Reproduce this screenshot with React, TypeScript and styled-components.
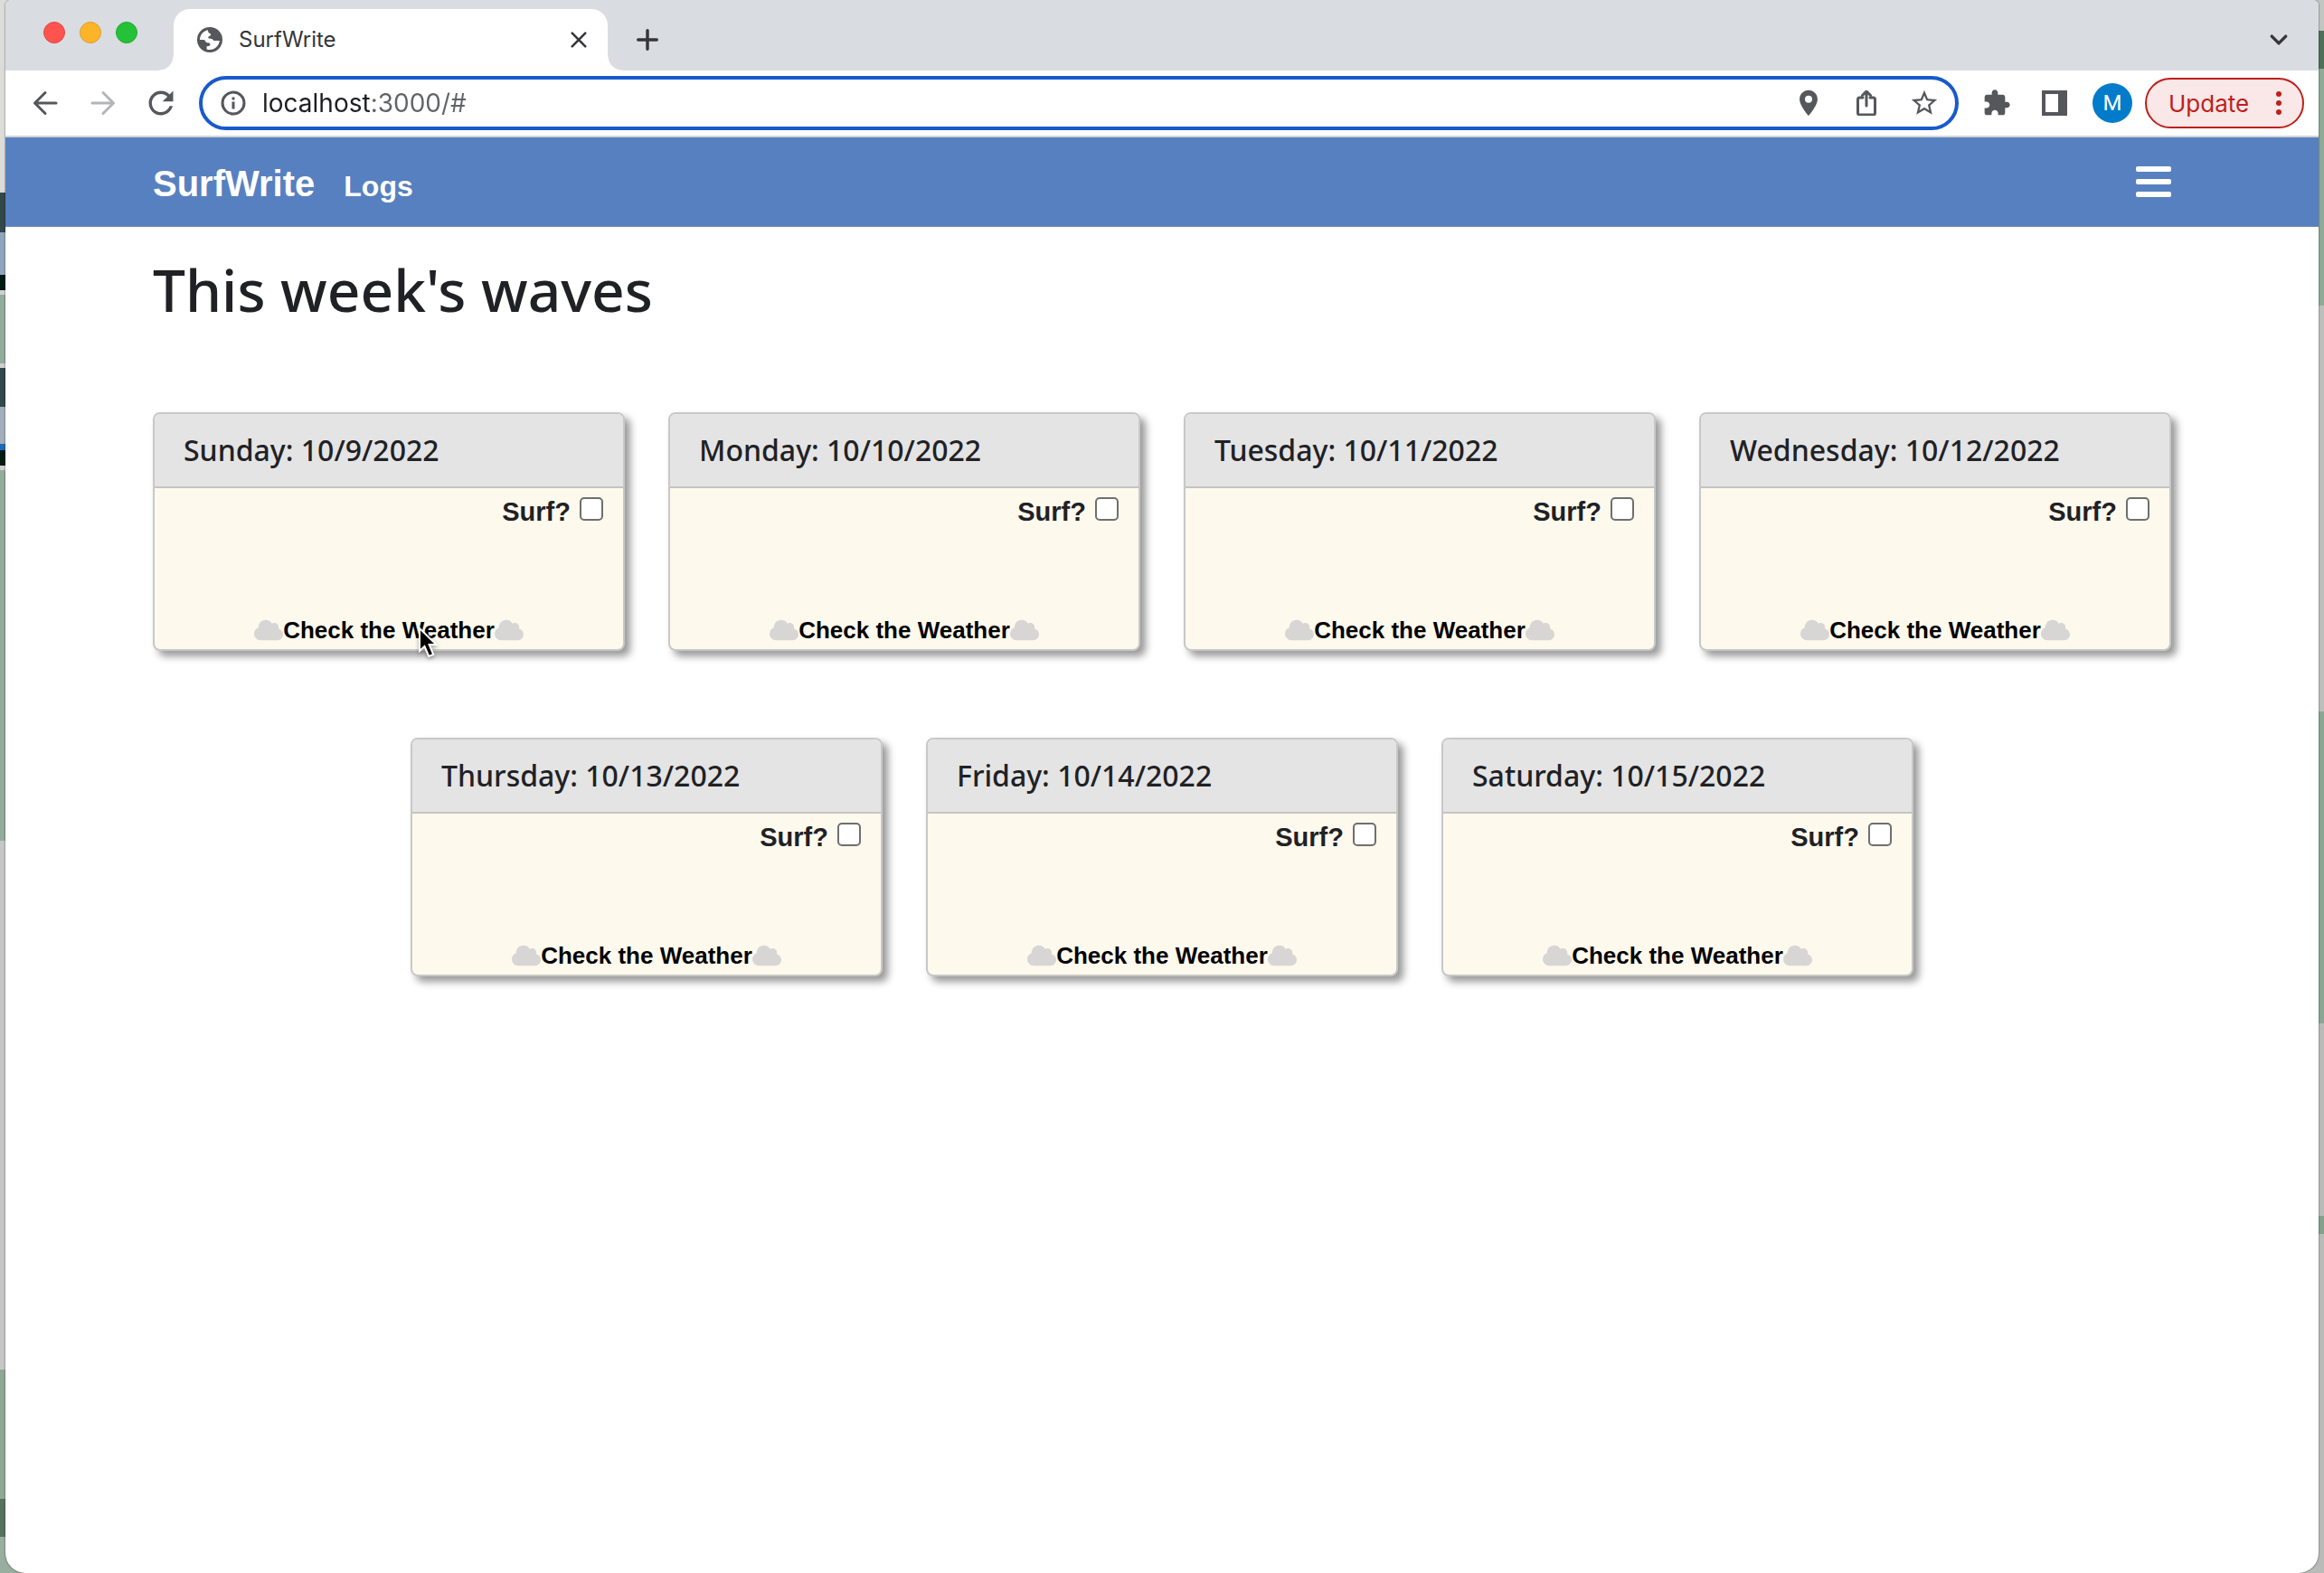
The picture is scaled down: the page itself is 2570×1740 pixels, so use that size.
import React from 'react';
import styled, { createGlobalStyle } from 'styled-components';
import { FaCloud } from 'react-icons/fa';

const uiFont = "Inter, 'Liberation Sans', sans-serif";
const bodyFont = "'Liberation Sans', Arial, sans-serif";
const headingFont = "'Noto Sans', 'Open Sans', sans-serif";

const iconGrey = '#55575b';

const GlobalStyle = createGlobalStyle`
  *, *::before, *::after { box-sizing: border-box; }
  body { margin: 0; }
  button, input { font: inherit; color: inherit; }
  h1, h2 { margin: 0; }
`;

/* ---------- desktop and window ---------- */

const Desktop = styled.div`
  min-height: 100vh;
  padding: 0 6px;
  display: flex;
  background:
    linear-gradient(
        #dcdcda 213px, #33484a 213px 257px, #91a5c0 257px 304px, #021a14 304px 321px,
        #d0d0d0 321px 326px, #93ac9b 326px 402px, #d0d0d0 402px 407px, #33484a 407px 450px,
        #a3aebc 450px 491px, #1f68b8 491px 498px, #021a14 498px 515px, #d0d0d0 515px 520px,
        #93ac9b 520px 930px, #c6c6c6 930px 1515px, #8fa896 1515px 1658px, #587260 1658px 1700px,
        #9aaea0 1700px
      )
      left / 30px 100% no-repeat,
    linear-gradient(
        #c2c6c3 34px, #4f7058 34px 76px, #8fab97 76px 338px, #bdbfbd 338px 787px,
        #8ba794 787px 1132px, #b9bbb9 1132px 1345px, #86a08e 1345px 1365px, #b9bbb9 1365px
      )
      right / 30px 100% no-repeat,
    #c6c6c6;
`;

const BrowserWindow = styled.div`
  flex: 1;
  min-width: 0;
  display: flex;
  flex-direction: column;
  background: #fff;
  border-radius: 6px 6px 22px 22px;
  overflow: hidden;
  box-shadow: 0 0 2px rgba(0, 0, 0, 0.7);
`;

/* ---------- tab strip ---------- */

const TabStrip = styled.div`
  height: 78px;
  display: flex;
  align-items: flex-end;
  padding: 0 32px 0 42px;
  background: #d9dce1;
  color: #35363a;
  font-family: ${uiFont};
`;

const TrafficLights = styled.div`
  align-self: flex-start;
  height: 72px;
  display: flex;
  align-items: center;
  gap: 16px;
  margin-right: 40px;
`;

const Light = styled.button<{ $fill: string; $edge: string }>`
  width: 24px;
  height: 24px;
  padding: 0;
  border: 1px solid ${(p) => p.$edge};
  border-radius: 50%;
  background: ${(p) => p.$fill};
`;

const Tab = styled.div`
  position: relative;
  width: 480px;
  height: 68px;
  display: flex;
  align-items: center;
  gap: 18px;
  padding: 0 20px 0 26px;
  background: #fff;
  border-radius: 18px 18px 0 0;

  &::before,
  &::after {
    content: '';
    position: absolute;
    bottom: 0;
    width: 16px;
    height: 16px;
  }
  &::before {
    right: 100%;
    background: radial-gradient(circle at 0 0, transparent 15px, #fff 16px);
  }
  &::after {
    left: 100%;
    background: radial-gradient(circle at 100% 0, transparent 15px, #fff 16px);
  }
`;

const TabTitle = styled.span`
  flex: 1;
  font-size: 24px;
  line-height: 32px;
`;

const IconButton = styled.button<{ $size?: number; $color?: string }>`
  flex: none;
  width: ${(p) => p.$size ?? 32}px;
  height: ${(p) => p.$size ?? 32}px;
  padding: 0;
  display: flex;
  align-items: center;
  justify-content: center;
  border: 0;
  background: none;
  color: ${(p) => p.$color ?? iconGrey};

  svg {
    flex: none;
  }
`;

const StripActions = styled.div`
  flex: 1;
  height: 68px;
  display: flex;
  align-items: center;
  justify-content: space-between;
  padding-left: 32px;
`;

/* ---------- toolbar ---------- */

const Toolbar = styled.div`
  height: 74px;
  display: flex;
  align-items: center;
  gap: 26px;
  padding: 0 16px 0 28px;
  border-bottom: 2px solid #d3d4d8;
  font-family: ${uiFont};
`;

const ButtonGroup = styled.div`
  display: flex;
  align-items: center;
  gap: 32px;
`;

const AddressBar = styled.form`
  flex: 1;
  height: 60px;
  display: flex;
  align-items: center;
  gap: 18px;
  padding: 0 18px 0 20px;
  border: 4px solid #185acb;
  border-radius: 30px;
`;

const AddressInput = styled.input`
  flex: 1;
  min-width: 0;
  padding: 0;
  border: 0;
  outline: 0;
  font-size: 28px;
  line-height: 36px;
  background: linear-gradient(90deg, #1d1e21 119px, #606367 119px);
  -webkit-background-clip: text;
  background-clip: text;
  color: transparent;
`;

const ProfileArea = styled.div`
  display: flex;
  align-items: center;
  gap: 14px;
`;

const Avatar = styled.button`
  width: 44px;
  height: 44px;
  padding: 0;
  border: 0;
  border-radius: 50%;
  background: #037bcb;
  color: #fff;
  font-family: Roboto, sans-serif;
  font-size: 24px;
`;

const UpdateButton = styled.button`
  width: 176px;
  height: 56px;
  display: flex;
  align-items: center;
  justify-content: space-between;
  padding: 0 22px 0 24px;
  border: 2px solid #bd1f1c;
  border-radius: 28px;
  background: #f9e8e7;
  color: #bd1f1c;
  font-size: 26px;
`;

/* ---------- site header ---------- */

const Container = styled.div`
  width: 100%;
  max-width: 2280px;
  margin: 0 auto;
  padding: 0 24px;
`;

const Nav = styled.nav`
  background: #5780c0;
  border-bottom: 1px solid #7089b5;
`;

const NavRow = styled(Container)`
  height: 98px;
  display: flex;
  align-items: center;
  justify-content: space-between;
`;

const NavLinks = styled.div`
  display: flex;
  align-items: baseline;
  gap: 32px;
  padding-top: 4px;
`;

const NavLink = styled.a<{ $brand?: boolean }>`
  color: #fff;
  font: 700 ${(p) => (p.$brand ? 40 : 32)}px ${bodyFont};
  text-decoration: none;
`;

const MenuButton = styled(IconButton)`
  width: 39px;
  height: 34px;
`;

/* ---------- week cards ---------- */

const Main = styled(Container)`
  flex: 1;
  padding-top: 32px;
  padding-bottom: 96px;
  color: #202125;
`;

const PageTitle = styled.h1`
  font: 500 64px/76px ${headingFont};
`;

const Week = styled.div`
  display: flex;
  flex-wrap: wrap;
  justify-content: center;
  gap: 96px 48px;
  margin-top: 97px;
`;

const Card = styled.section`
  position: relative;
  flex: 0 0 calc((100% - 144px) / 4);
  min-height: 264px;
  display: flex;
  flex-direction: column;
  border: 2px solid #c8c8c8;
  border-radius: 8px;
  background: #fef9ed;
  box-shadow: 6px 6px 8px #999;
`;

const CardTitle = styled.h2`
  padding: 18px 32px;
  border-bottom: 2px solid #c4c4c4;
  border-radius: 6px 6px 0 0;
  background: #e4e4e4;
  font: 500 32px/44px ${headingFont};
`;

const CardBody = styled.div`
  flex: 1;
  display: flex;
  flex-direction: column;
  justify-content: space-between;
  padding: 10px 22px 6px;
  font-family: ${bodyFont};
  font-weight: 700;
`;

const SurfLabel = styled.label`
  align-self: flex-end;
  display: flex;
  gap: 10px;
  font-size: 29px;
  line-height: 32px;
`;

const SurfCheckbox = styled.input`
  appearance: none;
  width: 26px;
  height: 26px;
  margin: 0;
  border: 2px solid #6f6f6f;
  border-radius: 5px;
  background: #fff;
`;

const WeatherButton = styled.button`
  align-self: center;
  display: flex;
  align-items: center;
  padding: 0;
  border: 0;
  background: none;
  color: #000;
  font-size: 26px;
  line-height: 30px;
  white-space: nowrap;

  svg {
    width: 32px;
    height: 26px;
    color: #d8d5d5;
  }
`;

const Pointer = styled.svg`
  position: absolute;
  left: 288px;
  top: 232px;
  z-index: 1;
  filter: drop-shadow(0 2px 2px rgba(0, 0, 0, 0.35));
`;

/* ---------- icons ---------- */

const Stroke = ({ d, size = 28, width = 3 }: { d: string; size?: number; width?: number }) => (
  <svg
    width={size}
    height={size}
    viewBox="0 0 28 28"
    fill="none"
    stroke="currentColor"
    strokeWidth={width}
    strokeLinecap="round"
    strokeLinejoin="round"
    aria-hidden="true"
  >
    <path d={d} />
  </svg>
);

const Fill = ({ d, size = 32, box = '0 0 24 24' }: { d: string; size?: number; box?: string }) => (
  <svg width={size} height={size} viewBox={box} fill="currentColor" fillRule="evenodd" aria-hidden="true">
    <path d={d} />
  </svg>
);

const GlobeIcon = () => (
  <svg width="28" height="28" viewBox="0 0 28 28" aria-hidden="true">
    <circle cx="14" cy="14" r="14" fill={iconGrey} />
    <path
      fill="#fff"
      d="M3 14C3 8.700 6.700 4.300 11.700 3.200C12.500 4 12 5 12.500 5.800C13 7 15 6.500 15.200 8.200C15.200 9.800 12.500 9.800 12.200 11.200C12 12.500 13.500 12.600 15.500 12.800C17.600 13 17.500 15 19 15H24.800C24.300 20.500 19.800 24.900 14 25C12.800 25 11.500 24.800 10.600 24.400V21.300C12 21 14.500 21 14.500 19C14.500 17.500 12.700 17.300 11 17.200C8.800 17 9.500 14 7 14Z"
    />
  </svg>
);

const pin =
  'M12 2C8.130 2 5 5.130 5 9c0 5.250 7 13 7 13s7-7.750 7-13c0-3.870-3.130-7-7-7zm0 9.800a2.800 2.800 0 1 1 0-5.600 2.800 2.800 0 0 1 0 5.600z';
const star =
  'M22 9.240l-7.190-.62L12 2 9.190 8.630 2 9.240l5.460 4.730L5.820 21 12 17.270 18.180 21l-1.630-7.030L22 9.240zM12 15.400l-3.760 2.270 1-4.280-3.320-2.880 4.380-.38L12 6.100l1.710 4.040 4.380.38-3.320 2.880 1 4.280L12 15.400z';
const puzzle =
  'M20.500 11H19V7c0-1.100-.9-2-2-2h-4V3.500C13 2.120 11.880 1 10.500 1S8 2.120 8 3.500V5H4c-1.100 0-1.990.9-1.990 2v3.800H3.500c1.490 0 2.700 1.210 2.700 2.700s-1.210 2.700-2.700 2.700H2V20c0 1.100.9 2 2 2h3.800v-1.500c0-1.490 1.210-2.700 2.700-2.700 1.490 0 2.700 1.210 2.700 2.700V22H17c1.100 0 2-.9 2-2v-4h1.500c1.380 0 2.500-1.120 2.500-2.500S21.880 11 20.500 11z';
const reload =
  'M17.650 6.350C16.200 4.900 14.210 4 12 4c-4.420 0-7.990 3.580-7.990 8s3.570 8 7.990 8c3.730 0 6.840-2.550 7.730-6h-2.080c-.82 2.330-3.040 4-5.650 4-3.310 0-6-2.690-6-6s2.690-6 6-6c1.660 0 3.140.69 4.220 1.780L13 11h7V4l-2.350 2.350z';

const SidePanelIcon = () => <Fill size={28} box="0 0 28 28" d="M0 0H28V28H0ZM4 4V24H18V4Z" />;

const InfoIcon = () => (
  <svg width="28" height="28" viewBox="0 0 28 28" fill="none" stroke={iconGrey} strokeWidth="3" aria-hidden="true">
    <circle cx="14" cy="14" r="12" />
    <path d="M14 12.500V20.500M14 7.500V10.500" />
  </svg>
);

const DotsIcon = () => (
  <svg width="8" height="28" viewBox="0 0 8 28" fill="currentColor" aria-hidden="true">
    <circle cx="4" cy="4" r="3" />
    <circle cx="4" cy="14" r="3" />
    <circle cx="4" cy="24" r="3" />
  </svg>
);

const BarsIcon = () => (
  <svg width="39" height="34" viewBox="0 0 39 34" fill="currentColor" aria-hidden="true">
    <rect width="39" height="6" rx="2" />
    <rect y="14" width="39" height="6" rx="2" />
    <rect y="28" width="39" height="6" rx="2" />
  </svg>
);

const MousePointer = () => (
  <Pointer width="30" height="42" viewBox="0 0 30 42" aria-hidden="true">
    <path
      d="M5 5V30L10.500 25L15.200 36L20.300 34L15.600 23H23.500Z"
      fill="#000"
      stroke="#fff"
      strokeWidth="2"
    />
  </Pointer>
);

/* ---------- content ---------- */

const days = [
  { name: 'Sunday', date: '10/9/2022', hovered: true },
  { name: 'Monday', date: '10/10/2022' },
  { name: 'Tuesday', date: '10/11/2022' },
  { name: 'Wednesday', date: '10/12/2022' },
  { name: 'Thursday', date: '10/13/2022' },
  { name: 'Friday', date: '10/14/2022' },
  { name: 'Saturday', date: '10/15/2022' },
];

const DayCard = ({ name, date, hovered }: { name: string; date: string; hovered?: boolean }) => {
  const id = `surf-${name.toLowerCase()}`;
  return (
    <Card>
      <CardTitle>{`${name}: ${date}`}</CardTitle>
      <CardBody>
        <SurfLabel htmlFor={id}>
          Surf?
          <SurfCheckbox id={id} type="checkbox" />
        </SurfLabel>
        <WeatherButton type="button">
          <FaCloud />
          Check the Weather
          <FaCloud />
        </WeatherButton>
      </CardBody>
      {hovered && <MousePointer />}
    </Card>
  );
};

export default function App() {
  return (
    <Desktop>
      <GlobalStyle />
      <BrowserWindow>
        <TabStrip>
          <TrafficLights>
            <Light type="button" aria-label="Close window" $fill="#ff544d" $edge="#e2463f" />
            <Light type="button" aria-label="Minimize window" $fill="#fdb429" $edge="#e09e2a" />
            <Light type="button" aria-label="Zoom window" $fill="#25c138" $edge="#1fab2e" />
          </TrafficLights>
          <Tab>
            <GlobeIcon />
            <TabTitle>SurfWrite</TabTitle>
            <IconButton type="button" aria-label="Close tab" $size={24} $color="#35363a">
              <Stroke size={24} d="M5.500 5.500L22.500 22.500M22.500 5.500L5.500 22.500" />
            </IconButton>
          </Tab>
          <StripActions>
            <IconButton type="button" aria-label="New tab" $size={24} $color="#35363a">
              <Stroke size={24} width={4} d="M14 2V26M2 14H26" />
            </IconButton>
            <IconButton type="button" aria-label="Search tabs" $size={24} $color="#35363a">
              <Stroke size={24} width={4} d="M5 9.500L14 18.500L23 9.500" />
            </IconButton>
          </StripActions>
        </TabStrip>

        <Toolbar>
          <ButtonGroup>
            <IconButton type="button" aria-label="Back">
              <Stroke d="M26 14H2.500M14 2.500L2.500 14L14 25.500" />
            </IconButton>
            <IconButton type="button" aria-label="Forward" $color="#b4b5b7">
              <Stroke d="M2 14H25.500M14 2.500L25.500 14L14 25.500" />
            </IconButton>
            <IconButton type="button" aria-label="Reload">
              <Fill size={32} box="2.500 2.500 19 19" d={reload} />
            </IconButton>
          </ButtonGroup>
          <AddressBar>
            <InfoIcon />
            <AddressInput type="text" aria-label="Address" defaultValue="localhost:3000/#" />
            <ButtonGroup>
              <IconButton type="button" aria-label="Location">
                <Fill size={34} d={pin} />
              </IconButton>
              <IconButton type="button" aria-label="Share">
                <Stroke d="M10 8H6.500Q4.500 8 4.500 10V25Q4.500 27 6.500 27H21.500Q23.500 27 23.500 25V10Q23.500 8 21.500 8H18M14 17V1.500M9.500 5.500L14 1L18.500 5.500" />
              </IconButton>
              <IconButton type="button" aria-label="Bookmark">
                <Fill size={34} d={star} />
              </IconButton>
            </ButtonGroup>
          </AddressBar>
          <ButtonGroup>
            <IconButton type="button" aria-label="Extensions">
              <Fill d={puzzle} />
            </IconButton>
            <IconButton type="button" aria-label="Side panel">
              <SidePanelIcon />
            </IconButton>
          </ButtonGroup>
          <ProfileArea>
            <Avatar type="button">M</Avatar>
            <UpdateButton type="button">
              Update
              <DotsIcon />
            </UpdateButton>
          </ProfileArea>
        </Toolbar>

        <Nav>
          <NavRow>
            <NavLinks>
              <NavLink href="#" $brand>
                SurfWrite
              </NavLink>
              <NavLink href="#">Logs</NavLink>
            </NavLinks>
            <MenuButton type="button" aria-label="Menu" $color="#fff">
              <BarsIcon />
            </MenuButton>
          </NavRow>
        </Nav>

        <Main as="main">
          <PageTitle>This week's waves</PageTitle>
          <Week>
            {days.map((day) => (
              <DayCard key={day.name} {...day} />
            ))}
          </Week>
        </Main>
      </BrowserWindow>
    </Desktop>
  );
}
